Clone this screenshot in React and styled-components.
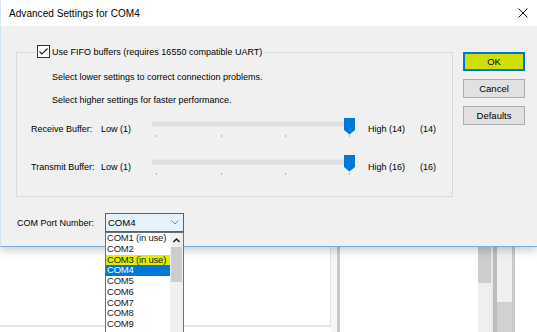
import React from "react";
import styled, { createGlobalStyle } from "styled-components";

const Global = createGlobalStyle`
  html, body { margin: 0; padding: 0; background: #ffffff; }
  body { font-family: "Liberation Sans", Arial, sans-serif; color: #000; }
  * { box-sizing: border-box; }
`;

const Screen = styled.div`
  width: 537px;
  height: 332px;
  overflow: hidden;
  display: flex;
  flex-direction: column;
  background: #ffffff;
`;

const Dialog = styled.div`
  position: relative;
  z-index: 2;
  display: flex;
  flex-direction: column;
  box-shadow: 0 3px 9px rgba(0, 0, 0, 0.22);
`;

const TitleBar = styled.div`
  height: 26px;
  background: #ffffff;
  display: flex;
  align-items: center;
  justify-content: space-between;
  padding: 0 9px 0 8px;
  border-left: 1px solid #d6e7f5;
`;

const Title = styled.span`
  font-size: 10px;
  letter-spacing: 0.05px;
  color: #000;
  margin-top: 1px;
`;

const Body = styled.div`
  height: 221px;
  background: #f0f0f0;
  border-left: 1px solid #cfe3f3;
  border-bottom: 1px solid #78acd8;
  display: flex;
  padding: 26px 12px 0 15px;
  gap: 10px;
`;

const LeftCol = styled.div`
  width: 437px;
  display: flex;
  flex-direction: column;
`;

const GroupBox = styled.div`
  height: 145px;
  border: 1px solid #d9d9d9;
  display: flex;
  flex-direction: column;
`;

const Legend = styled.label`
  display: flex;
  align-items: center;
  gap: 2px;
  width: fit-content;
  height: 13px;
  margin: -8px 0 0 18px;
  padding: 0 2px;
  background: #f0f0f0;
  font-size: 9px;
`;

const Desc = styled.div`
  font-size: 9px;
  line-height: 14px;
  height: 14px;
  margin: ${(p) => p.$mt}px 0 0 35px;
`;

const SliderRow = styled.div`
  display: grid;
  grid-template-columns: 70px 46px 208px 13px 52px auto;
  align-items: center;
  height: 22px;
  padding-left: 14px;
  margin-top: ${(p) => p.$mt}px;
  font-size: 9px;
`;

const Cell = styled.span`
  white-space: nowrap;
  padding-top: ${(p) => p.$pt || 0}px;
`;

const ComRow = styled.div`
  display: flex;
  align-items: center;
  margin-top: 16px;
  font-size: 9px;
`;

const ComLabel = styled.span`
  width: 89px;
  padding-left: 1px;
`;

const Combo = styled.div`
  position: relative;
  width: 79px;
  height: 19px;
  border: 1px solid #0078d7;
  background: #e5f1fb;
  display: flex;
  align-items: center;
  justify-content: space-between;
  padding: 0 4px 0 2px;
  font-size: 9.5px;
`;

const DropList = styled.div`
  position: absolute;
  top: 18px;
  left: -1px;
  width: 79px;
  height: 120px;
  border: 1px solid #6f6f6f;
  background: #ffffff;
  display: flex;
  z-index: 5;
`;

const Items = styled.div`
  width: 64px;
  display: flex;
  flex-direction: column;
`;

const Item = styled.div`
  height: 10.75px;
  line-height: 10.75px;
  padding-left: 1px;
  font-size: 9.5px;
  letter-spacing: -0.2px;
  white-space: nowrap;
  color: ${(p) => (p.$sel ? "#ffffff" : "#1a1a1a")};
  background: ${(p) => (p.$sel ? "#0078d7" : p.$mark ? "#e2ee00" : "transparent")};
`;

const ListScroll = styled.div`
  width: 13px;
  background: #f0f0f0;
  display: flex;
  flex-direction: column;
  align-items: center;
`;

const ScrollArrow = styled.div`
  height: 14px;
  display: flex;
  align-items: center;
  justify-content: center;
`;

const ScrollThumb = styled.div`
  width: 11px;
  height: 35px;
  background: #cdcdcd;
`;

const Buttons = styled.div`
  width: 62px;
  display: flex;
  flex-direction: column;
  gap: 8px;
`;

const Button = styled.div`
  height: 19px;
  display: flex;
  align-items: center;
  justify-content: center;
  font-size: 9.5px;
  background: ${(p) => (p.$primary ? "#cfe000" : "#e1e1e1")};
  border: ${(p) => (p.$primary ? "2px solid #0078d7" : "1px solid #adadad")};
`;

const Backdrop = styled.div`
  flex: 1;
  display: flex;
  background: #ffffff;
`;

const PanelA = styled.div`
  width: 332px;
  height: 80px;
  background: #ffffff;
  border-right: 1px solid #e0e0e0;
  border-bottom: 2px solid #e4e4e4;
`;

const Strip = styled.div`
  width: ${(p) => p.$w}px;
  background: ${(p) => p.$bg};
  display: flex;
  flex-direction: column;
`;

const StripPart = styled.div`
  height: ${(p) => p.$h}px;
  flex: ${(p) => (p.$h ? "none" : 1)};
  background: ${(p) => p.$bg};
`;

const CheckBox = () => (
  <svg width="13" height="13" viewBox="0 0 13 13">
    <rect x="0.5" y="0.5" width="12" height="12" fill="#fff" stroke="#333" />
    <path d="M2.5 6.5 L5 9 L10.5 3.5" fill="none" stroke="#222" strokeWidth="1.1" />
  </svg>
);

const CloseIcon = () => (
  <svg width="10" height="10" viewBox="0 0 10 10">
    <path d="M0.5 0.5 L9.5 9.5 M9.5 0.5 L0.5 9.5" stroke="#111" strokeWidth="1" />
  </svg>
);

const Chevron = () => (
  <svg width="8" height="5" viewBox="0 0 8 5">
    <path d="M0.5 0.5 L4 4 L7.5 0.5" fill="none" stroke="#8a8a8a" strokeWidth="1" />
  </svg>
);

const UpChevron = () => (
  <svg width="7" height="5" viewBox="0 0 7 5">
    <path d="M0.5 4 L3.5 1 L6.5 4" fill="none" stroke="#111" strokeWidth="1.4" />
  </svg>
);

const Slider = ({ thumbTop }) => (
  <svg width="208" height="22" viewBox="0 0 208 22">
    <rect x="5" y="5" width="198" height="4" fill="#e0e0e0" stroke="#d6d6d6" strokeWidth="0.5" />
    {[9, 74, 138, 202].map((x) => (
      <rect key={x} x={x} y="18" width="1" height="2" fill="#b5b5b5" />
    ))}
    <path
      d={`M197 ${thumbTop} h11 v12 l-5.5 4.5 l-5.5 -4.5 z`}
      fill="#0078d7"
    />
  </svg>
);

const ports = [
  "COM1 (in use)",
  "COM2",
  "COM3 (in use)",
  "COM4",
  "COM5",
  "COM6",
  "COM7",
  "COM8",
  "COM9",
];

export default function App() {
  return (
    <Screen>
      <Global />
      <Dialog>
        <TitleBar>
          <Title>Advanced Settings for COM4</Title>
          <CloseIcon />
        </TitleBar>
        <Body>
          <LeftCol>
            <GroupBox>
              <Legend>
                <CheckBox />
                <span>Use FIFO buffers (requires 16550 compatible UART)</span>
              </Legend>
              <Desc $mt={12}>Select lower settings to correct connection problems.</Desc>
              <Desc $mt={9}>Select higher settings for faster performance.</Desc>
              <SliderRow $mt={10}>
                <Cell $pt={1}>Receive Buffer:</Cell>
                <Cell $pt={1}>Low (1)</Cell>
                <Slider thumbTop={1} />
                <span />
                <Cell $pt={1}>High (14)</Cell>
                <Cell $pt={1}>(14)</Cell>
              </SliderRow>
              <SliderRow $mt={16}>
                <Cell $pt={1}>Transmit Buffer:</Cell>
                <Cell $pt={1}>Low (1)</Cell>
                <Slider thumbTop={0} />
                <span />
                <Cell $pt={1}>High (16)</Cell>
                <Cell $pt={1}>(16)</Cell>
              </SliderRow>
            </GroupBox>
            <ComRow>
              <ComLabel>COM Port Number:</ComLabel>
              <Combo>
                <span>COM4</span>
                <Chevron />
                <DropList>
                  <Items>
                    {ports.map((p) => (
                      <Item key={p} $sel={p === "COM4"} $mark={p === "COM3 (in use)"}>
                        {p}
                      </Item>
                    ))}
                  </Items>
                  <ListScroll>
                    <ScrollArrow>
                      <UpChevron />
                    </ScrollArrow>
                    <ScrollThumb />
                  </ListScroll>
                </DropList>
              </Combo>
            </ComRow>
          </LeftCol>
          <Buttons>
            <Button $primary>OK</Button>
            <Button>Cancel</Button>
            <Button>Defaults</Button>
          </Buttons>
        </Body>
      </Dialog>
      <Backdrop>
        <PanelA />
        <Strip $w={6} $bg="#f6f6f6" />
        <Strip $w={3} $bg="#c9c9c9" />
        <Strip $w={138} $bg="#ffffff" />
        <Strip $w={13} $bg="#efefef">
          <StripPart $h={36} $bg="#cdcdcd" />
        </Strip>
        <Strip $w={2} $bg="#e9e9e9" />
        <Strip $w={4} $bg="#bdbdbd" />
        <Strip $w={15} $bg="#efefef">
          <StripPart $h={55} $bg="#f0f0f0" />
          <StripPart $bg="#d1d1d1" />
        </Strip>
        <Strip $w={3} $bg="#c9c9c9" />
        <Strip $w={22} $bg="#ffffff" />
      </Backdrop>
    </Screen>
  );
}
